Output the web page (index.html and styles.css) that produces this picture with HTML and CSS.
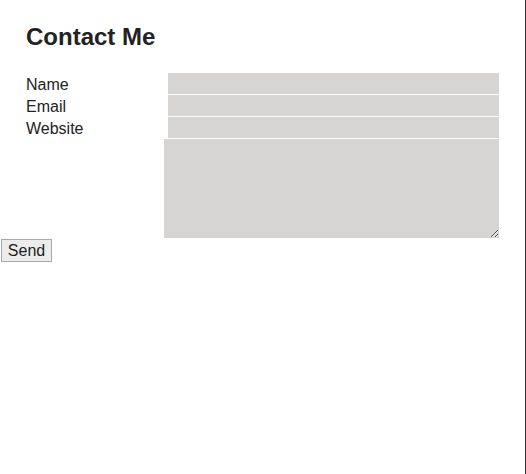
FILE: index.html
```html
<!DOCTYPE html>
<html>
<head>
<meta charset="utf-8">
<link rel="stylesheet" href="styles.css">
</head>
<body>
<form class="contact">
  <h2 class="title">Contact Me</h2>
  <div class="row"><label class="label">Name</label><input class="field" type="text"></div>
  <div class="row"><label class="label">Email</label><input class="field" type="text"></div>
  <div class="row"><label class="label">Website</label><input class="field" type="text"></div>
  <textarea class="message"></textarea>
  <button class="send" type="button">Send</button>
</form>
</body>
</html>
```
FILE: styles.css
```css
html, body {
  margin: 0;
  padding: 0;
  background: #fff;
}
body {
  font-family: "Liberation Sans", Arial, sans-serif;
  color: #222;
  min-height: 474px;
}
body::after {
  content: "";
  position: fixed;
  top: 0;
  right: 0;
  width: 1px;
  height: 100%;
  background: #333;
}
.contact {
  display: flex;
  flex-direction: column;
  align-items: flex-start;
}
.title {
  margin: 23px 0 22px 26px;
  font-size: 24px;
  line-height: 28px;
  font-weight: bold;
  color: #222;
}
.row {
  display: flex;
  align-items: flex-start;
  padding-left: 26px;
  height: 22px;
}
.label {
  width: 142px;
  font-size: 16px;
  line-height: 23px;
}
.field {
  width: 331px;
  height: 21px;
  margin: 0;
  padding: 0;
  border: none;
  background: #d6d5d4;
  box-sizing: border-box;
  outline: none;
}
.message {
  margin: 0 0 0 164px;
  width: 335px;
  height: 99px;
  padding: 0;
  border: none;
  background: #d6d5d4;
  box-sizing: border-box;
  resize: both;
  outline: none;
}
.send {
  margin: 1px 0 0 1px;
  width: 51px;
  height: 23px;
  padding: 0;
  font-family: "Liberation Sans", Arial, sans-serif;
  font-size: 16px;
  line-height: 20px;
  color: #222;
  background: #ececec;
  border: 1px solid #a9a9a9;
  border-radius: 0;
}
```
